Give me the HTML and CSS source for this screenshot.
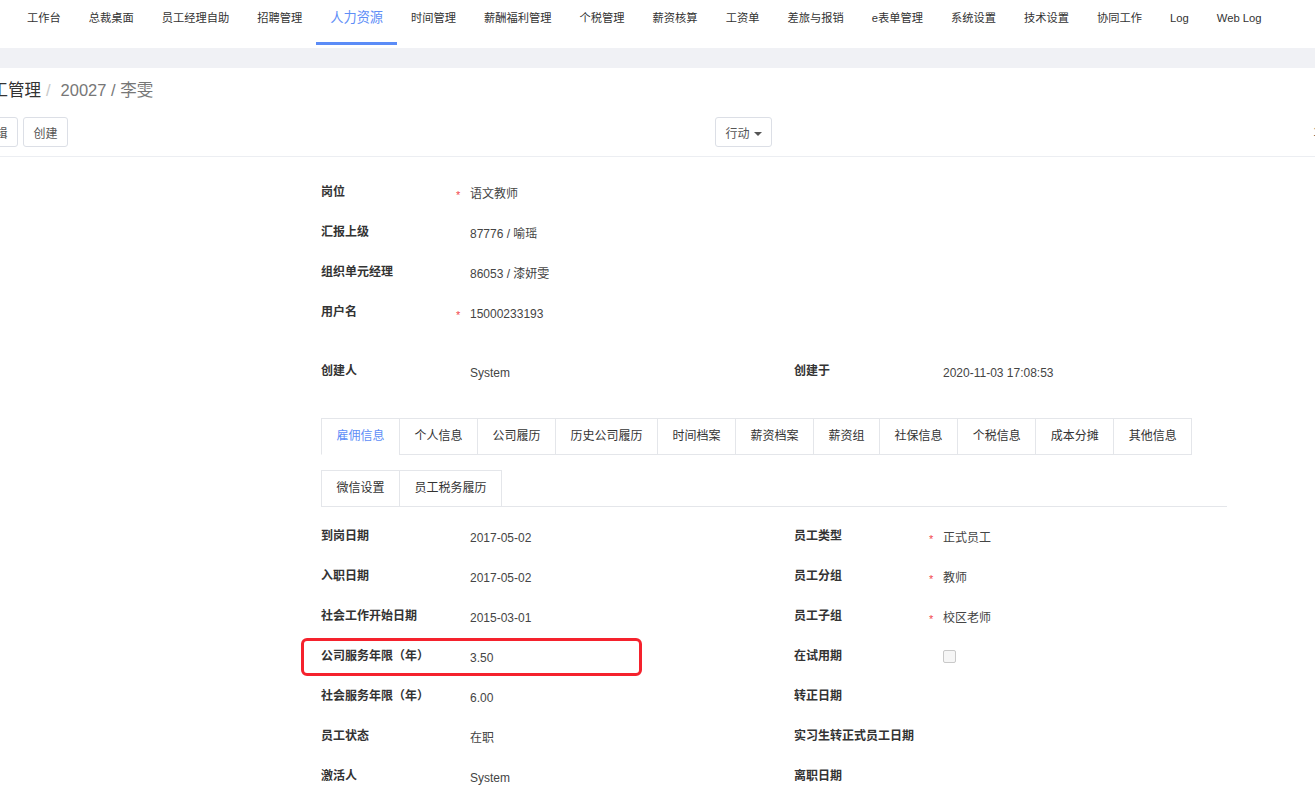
FILE: index.html
```html
<!DOCTYPE html>
<html lang="zh-CN">
<head>
    <meta charset="UTF-8">
    <meta name="viewport" content="width=device-width, initial-scale=1.0">
    <title>员工管理 - 20027 / 李雯</title>
    <link rel="stylesheet" href="styles.css">
</head>
<body>
    <!-- Menú superior -->
    <header class="topnav">
        <ul class="menu">
            <li>工作台</li>
            <li>总裁桌面</li>
            <li>员工经理自助</li>
            <li>招聘管理</li>
            <li class="active">人力资源</li>
            <li>时间管理</li>
            <li>薪酬福利管理</li>
            <li>个税管理</li>
            <li>薪资核算</li>
            <li>工资单</li>
            <li>差旅与报销</li>
            <li>e表单管理</li>
            <li>系统设置</li>
            <li>技术设置</li>
            <li>协同工作</li>
            <li>Log</li>
            <li>Web Log</li>
        </ul>
    </header>
    <div class="band"></div>

    <div class="control-panel">
        <ol class="breadcrumb">
            <li class="parent">员工管理</li>
            <li class="sep">/</li>
            <li class="current">20027 / 李雯</li>
        </ol>
        <div class="cp-buttons">
            <div class="cp-left">
                <button class="btn">编辑</button>
                <button class="btn">创建</button>
            </div>
            <div class="cp-mid">
                <button class="btn">行动 <span class="caret"></span></button>
            </div>
            <span class="pager">1 / 1</span>
        </div>
    </div>

    <div class="form-view">
        <div class="sheet">
            <div class="group">
                <div class="col">
                    <div class="field"><span class="label">岗位</span><span class="req">*</span><span class="value">语文教师</span></div>
                    <div class="field"><span class="label">汇报上级</span><span class="req"></span><span class="value">87776 / 喻瑶</span></div>
                    <div class="field"><span class="label">组织单元经理</span><span class="req"></span><span class="value">86053 / 漆妍雯</span></div>
                    <div class="field"><span class="label">用户名</span><span class="req">*</span><span class="value">15000233193</span></div>
                </div>
                <div class="col"></div>
            </div>

            <div class="group second">
                <div class="col">
                    <div class="field"><span class="label">创建人</span><span class="req"></span><span class="value">System</span></div>
                </div>
                <div class="col">
                    <div class="field"><span class="label">创建于</span><span class="req"></span><span class="value">2020-11-03 17:08:53</span></div>
                </div>
            </div>

            <ul class="tabs">
                <li class="active">雇佣信息</li>
                <li>个人信息</li>
                <li>公司履历</li>
                <li>历史公司履历</li>
                <li>时间档案</li>
                <li>薪资档案</li>
                <li>薪资组</li>
                <li>社保信息</li>
                <li>个税信息</li>
                <li>成本分摊</li>
                <li>其他信息</li>
                <li>微信设置</li>
                <li>员工税务履历</li>
            </ul>

            <div class="tab-content">
                <div class="group">
                    <div class="col">
                        <div class="field"><span class="label">到岗日期</span><span class="req"></span><span class="value">2017-05-02</span></div>
                        <div class="field"><span class="label">入职日期</span><span class="req"></span><span class="value">2017-05-02</span></div>
                        <div class="field"><span class="label">社会工作开始日期</span><span class="req"></span><span class="value">2015-03-01</span></div>
                        <div class="field marked">
                            <span class="label">公司服务年限（年）</span><span class="req"></span><span class="value">3.50</span>
                            <span class="highlight"></span>
                        </div>
                        <div class="field"><span class="label">社会服务年限（年）</span><span class="req"></span><span class="value">6.00</span></div>
                        <div class="field"><span class="label">员工状态</span><span class="req"></span><span class="value">在职</span></div>
                        <div class="field"><span class="label">激活人</span><span class="req"></span><span class="value">System</span></div>
                    </div>
                    <div class="col">
                        <div class="field"><span class="label">员工类型</span><span class="req">*</span><span class="value">正式员工</span></div>
                        <div class="field"><span class="label">员工分组</span><span class="req">*</span><span class="value">教师</span></div>
                        <div class="field"><span class="label">员工子组</span><span class="req">*</span><span class="value">校区老师</span></div>
                        <div class="field"><span class="label">在试用期</span><span class="req"></span><span class="value"><span class="checkbox"></span></span></div>
                        <div class="field"><span class="label">转正日期</span><span class="req"></span><span class="value"></span></div>
                        <div class="field"><span class="label">实习生转正式员工日期</span><span class="req"></span><span class="value"></span></div>
                        <div class="field"><span class="label">离职日期</span><span class="req"></span><span class="value"></span></div>
                    </div>
                </div>
            </div>
        </div>
    </div>
</body>
</html>
```

FILE: styles.css
```css
/* Reset */
* {
    margin: 0;
    padding: 0;
    box-sizing: border-box;
}

body {
    font-family: "Liberation Sans", "Noto Sans CJK SC", sans-serif;
    font-size: 12px;
    color: #333;
    background: #fff;
    width: 1315px;
    height: 803px;
    overflow: hidden;
}

/* Menú superior */
.topnav {
    height: 45px;
}

.menu {
    display: flex;
    list-style: none;
    padding-left: 13px;
    height: 45px;
}

.menu li {
    height: 45px;
    padding: 10px 14px 0;
    font-size: 11.25px;
    line-height: 16px;
    color: #333;
    white-space: nowrap;
    border-bottom: 3px solid transparent;
}

.menu li.active {
    color: #5e8ef7;
    font-size: 13.2px;
    border-bottom-color: #5b8cf7;
}

.band {
    margin-top: 3px;
    height: 20px;
    background: #f0f1f5;
}

/* Panel de control */
.control-panel {
    margin-left: -27px;
    padding: 10px 0 9px;
    border-bottom: 1px solid #eceef2;
}

.breadcrumb {
    display: flex;
    list-style: none;
    padding-left: 2px;
    font-size: 16.5px;
    line-height: 24px;
}

.breadcrumb .parent {
    color: #333;
}

.breadcrumb .sep {
    color: #c8c8c8;
    padding: 0 10px 0 5px;
}

.breadcrumb .current {
    color: #777;
}

.cp-buttons {
    display: flex;
    align-items: center;
    margin-top: 15px;
    height: 30px;
}

.cp-left {
    display: flex;
    gap: 5px;
    width: 742px;
    flex-shrink: 0;
}

.cp-mid {
    flex-shrink: 0;
}

.btn {
    height: 30px;
    padding: 0 9.5px;
    border: 1px solid #dcdfe6;
    border-radius: 3px;
    background: #fff;
    color: #555;
    font-family: inherit;
    font-size: 12px;
    white-space: nowrap;
}

.caret {
    display: inline-block;
    width: 0;
    height: 0;
    margin-left: 1px;
    vertical-align: middle;
    border-top: 4px solid #555;
    border-left: 4px solid transparent;
    border-right: 4px solid transparent;
}

.pager {
    flex-shrink: 0;
    margin-left: 541px;
    color: #555;
    white-space: nowrap;
}

/* Formulario */
.form-view {
    padding: 25px 0 0 321px;
}

.sheet {
    width: 906px;
}

.group {
    display: grid;
    grid-template-columns: 473px 1fr;
}

.group.second {
    margin-top: 19px;
}

.field {
    display: grid;
    grid-template-columns: 135px 14px 1fr;
    height: 40px;
}

.field .label {
    font-weight: bold;
    line-height: 20px;
    color: #333;
    white-space: nowrap;
}

.field .req {
    color: #f2454b;
    padding-top: 3px;
    line-height: 20px;
    font-size: 11px;
}

.field .value {
    padding-top: 2px;
    line-height: 20px;
    color: #444;
}

.field.marked {
    position: relative;
}

.highlight {
    position: absolute;
    left: -20px;
    top: -8px;
    width: 341px;
    height: 38px;
    border: 3px solid #f5222d;
    border-radius: 6px;
}

.checkbox {
    display: block;
    width: 13px;
    height: 13px;
    margin-top: 2px;
    border: 1px solid #c9c9c9;
    border-radius: 2px;
    background: #f6f6f6;
}

/* Pestañas */
.tabs {
    display: flex;
    flex-wrap: wrap;
    row-gap: 16px;
    list-style: none;
    margin-top: 17px;
    padding-left: 1px;
    border-bottom: 1px solid #e4e6ea;
}

.tabs li {
    height: 37px;
    padding: 0 14.5px;
    margin-left: -1px;
    margin-bottom: -1px;
    line-height: 35px;
    border: 1px solid #e4e6ea;
    color: #333;
    white-space: nowrap;
}

.tabs li.active {
    color: #5e8ef7;
    border-bottom-color: #fff;
}

.tab-content {
    padding-top: 19px;
}
```
